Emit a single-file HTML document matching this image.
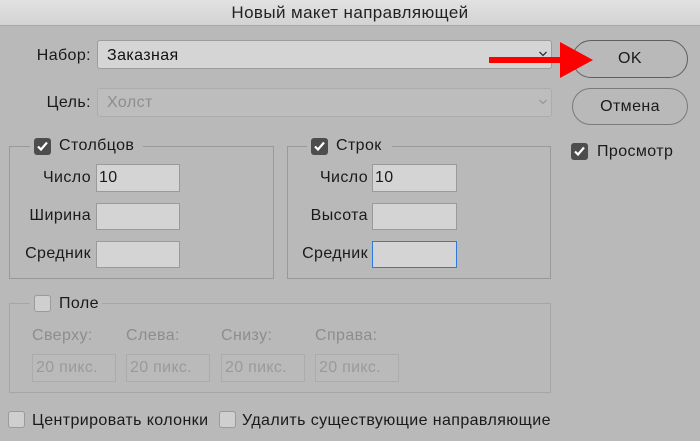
<!DOCTYPE html><html><head><meta charset="utf-8"><style>
*{margin:0;padding:0;box-sizing:border-box}
body{width:700px;height:441px;background:#b9b9b9;font-family:"Liberation Sans","DejaVu Sans",sans-serif;font-size:16px;letter-spacing:0.4px;color:#1a1a1a;position:relative;overflow:hidden}
.a{position:absolute;white-space:nowrap}
.title{left:0;top:0;width:700px;height:26px;background:linear-gradient(#e2e2e2,#d3d3d3);border-bottom:1px solid #a8a8a8;text-align:center;line-height:26px;font-size:17px;color:#222}
.sel{background:#d5d5d5;border:1px solid #9c9c9c;border-radius:3px}
.sel.d{background:#bdbdbd;border-color:#acacac}
.in{background:#d4d4d4;border:1px solid #9a9a9a}
.in.d{background:#bababa;border-color:#acacac;color:#9a9a9a;font-size:16px;line-height:25px;padding-left:3px;letter-spacing:0.3px}
.btn{border:1px solid #5e5e5e;border-radius:19px;text-align:center;font-size:16px}
.fs{border:1px solid #999}
.lg{background:#b9b9b9}
.cb{width:17px;height:17px;border-radius:3px;background:#4d4d4d}
.cb svg{display:block}
.cu{width:17px;height:17px;border-radius:3px;background:#cfcfcf;border:1px solid #9a9a9a}
.r{text-align:right}
.g{color:#8d8d8d}
</style></head><body>
<div class="a title">Новый макет направляющей</div>

<div class="a r" style="left:10px;width:81px;top:47px">Набор:</div>
<div class="a sel" style="left:97px;top:40px;width:455px;height:29px"></div>
<div class="a" style="left:107px;top:47px;color:#111">Заказная</div>
<svg class="a" style="left:538px;top:50px" width="10" height="8"><path d="M1.5 2l3.5 3.5 3.5-3.5" stroke="#333" stroke-width="1.3" fill="none"/></svg>

<div class="a r" style="left:10px;width:81px;top:94px">Цель:</div>
<div class="a sel d" style="left:97px;top:88px;width:455px;height:29px"></div>
<div class="a g" style="left:107px;top:94px">Холст</div>
<svg class="a" style="left:538px;top:98px" width="10" height="8"><path d="M1.5 2l3.5 3.5 3.5-3.5" stroke="#999" stroke-width="1.3" fill="none"/></svg>

<div class="a btn" style="left:572px;top:40px;width:116px;height:38px;line-height:36px">OK</div>
<div class="a btn" style="left:572px;top:88px;width:116px;height:37px;line-height:35px;border-color:#7a7a7a">Отмена</div>
<div class="a cb" style="left:571px;top:143px"><svg width="17" height="17"><path d="M4 8.5l3 3 6-7" stroke="#fff" stroke-width="2.2" fill="none"/></svg></div>
<div class="a" style="left:597px;top:143px">Просмотр</div>

<div class="a fs" style="left:9px;top:146px;width:265px;height:133px"></div>
<div class="a lg" style="left:30px;top:136px;width:113px;height:20px"></div>
<div class="a cb" style="left:34px;top:138px"><svg width="17" height="17"><path d="M4 8.5l3 3 6-7" stroke="#fff" stroke-width="2.2" fill="none"/></svg></div>
<div class="a" style="left:59px;top:137px">Столбцов</div>
<div class="a r" style="left:5px;width:86px;top:169px">Число</div>
<div class="a r" style="left:5px;width:86px;top:207px">Ширина</div>
<div class="a r" style="left:5px;width:86px;top:245px">Средник</div>
<div class="a in" style="left:96px;top:164px;width:84px;height:28px;padding-left:2px;line-height:26px">10</div>
<div class="a in" style="left:96px;top:203px;width:84px;height:27px"></div>
<div class="a in" style="left:96px;top:241px;width:84px;height:27px"></div>

<div class="a fs" style="left:287px;top:146px;width:264px;height:133px"></div>
<div class="a lg" style="left:307px;top:136px;width:85px;height:20px"></div>
<div class="a cb" style="left:311px;top:138px"><svg width="17" height="17"><path d="M4 8.5l3 3 6-7" stroke="#fff" stroke-width="2.2" fill="none"/></svg></div>
<div class="a" style="left:336px;top:137px">Строк</div>
<div class="a r" style="left:280px;width:88px;top:169px">Число</div>
<div class="a r" style="left:280px;width:88px;top:207px">Высота</div>
<div class="a r" style="left:280px;width:88px;top:245px">Средник</div>
<div class="a in" style="left:372px;top:164px;width:85px;height:28px;padding-left:2px;line-height:26px">10</div>
<div class="a in" style="left:372px;top:203px;width:85px;height:27px"></div>
<div class="a in" style="left:372px;top:241px;width:85px;height:27px;border-color:#2a7ae2"></div>

<div class="a fs" style="left:9px;top:303px;width:542px;height:90px;border-color:#a6a6a6"></div>
<div class="a lg" style="left:30px;top:293px;width:72px;height:20px"></div>
<div class="a cu" style="left:34px;top:295px"></div>
<div class="a" style="left:59px;top:295px">Поле</div>
<div class="a g" style="left:32px;top:327px">Сверху:</div>
<div class="a g" style="left:126px;top:327px">Слева:</div>
<div class="a g" style="left:221px;top:327px">Снизу:</div>
<div class="a g" style="left:315px;top:327px">Справа:</div>
<div class="a in d" style="left:32px;top:354px;width:84px;height:28px">20 пикс.</div>
<div class="a in d" style="left:126px;top:354px;width:84px;height:28px">20 пикс.</div>
<div class="a in d" style="left:221px;top:354px;width:84px;height:28px">20 пикс.</div>
<div class="a in d" style="left:315px;top:354px;width:84px;height:28px">20 пикс.</div>

<div class="a cu" style="left:8px;top:411px"></div>
<div class="a" style="left:32px;top:412px">Центрировать колонки</div>
<div class="a cu" style="left:219px;top:411px"></div>
<div class="a" style="left:242px;top:412px">Удалить существующие направляющие</div>

<svg class="a" style="left:0;top:0" width="700" height="441"><rect x="489" y="57" width="75" height="6" fill="#f00"/><polygon points="560,42 593,60 560,78" fill="#f00"/></svg>
</body></html>
